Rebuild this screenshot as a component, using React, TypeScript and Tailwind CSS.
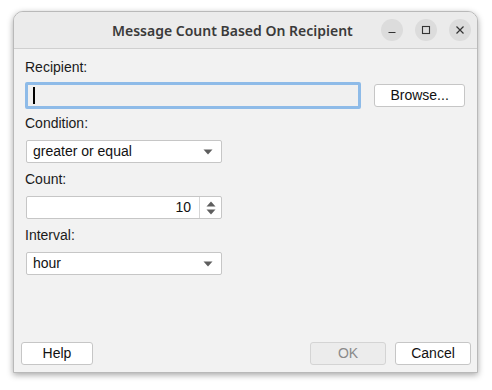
import { useState } from 'react'

const FIELD_LABEL = 'h-[17px] leading-[17px] text-[14px] text-[#1a1a1a]'

function Combo({ value }: { value: string }) {
  return (
    <div className="ml-[1px] flex h-[23px] w-[196px] items-center justify-between rounded-[2px] border border-[#c6c6c6] bg-white pl-[6px] pr-[8px]">
      <span className="text-[14px] text-[#111]">{value}</span>
      <svg width="10" height="6" viewBox="0 0 10 6">
        <path d="M0.5 0.5 H9.5 L5 5.5 Z" fill="#5e5e5e" />
      </svg>
    </div>
  )
}

function WinButton({ kind }: { kind: 'min' | 'max' | 'close' }) {
  return (
    <div className="flex h-[22px] w-[22px] items-center justify-center rounded-full bg-[#dcdcdc]">
      <svg width="10" height="10" viewBox="0 0 10 10">
        {kind === 'min' && <path d="M1.5 7.5 H8.5" stroke="#333" strokeWidth="1.2" />}
        {kind === 'max' && <rect x="1.5" y="1.5" width="7" height="7" fill="none" stroke="#333" strokeWidth="1.1" />}
        {kind === 'close' && <path d="M1.5 1.5 L8.5 8.5 M8.5 1.5 L1.5 8.5" stroke="#333" strokeWidth="1.2" />}
      </svg>
    </div>
  )
}

export default function App() {
  const [count] = useState(10)

  return (
    <div
      className="h-[390px] w-[492px] bg-white pl-[13px] pt-[11px]"
      style={{ fontFamily: '"Liberation Sans", Arial, sans-serif' }}
    >
      <div className="flex h-[362px] w-[465px] flex-col overflow-hidden rounded-t-[10px] border border-[#b9b9b9] bg-[#f2f2f2] shadow-[0_2px_6px_rgba(0,0,0,0.35)]">
        {/* Title bar */}
        <div className="flex h-[37px] shrink-0 items-center border-b border-[#cfcfcf] bg-[#ebebeb] pr-[6px]">
          <div
            className="flex-1 pl-[98px] text-[14px] font-semibold text-[#3a3a3a]"
            style={{ fontFamily: '"Noto Sans", "Open Sans", sans-serif' }}
          >
            Message Count Based On Recipient
          </div>
          <div className="flex items-center gap-[12px]">
            <WinButton kind="min" />
            <WinButton kind="max" />
            <WinButton kind="close" />
          </div>
        </div>

        {/* Body */}
        <div className="flex flex-1 flex-col pl-[11px] pr-[12px] pt-[10px]">
          <div className={FIELD_LABEL}>Recipient:</div>
          <div className="mt-[6px] flex items-center">
            <div className="flex h-[27px] w-[337px] items-center rounded-[2px] border-[3px] border-[#8ebbe8] bg-[#f0f0f0] pl-[5px]">
              <div className="h-[17px] w-[1.5px] bg-black" />
            </div>
            <button className="ml-[13px] h-[23px] w-[91px] rounded-[3px] border border-[#c6c6c6] bg-white text-[14px] text-[#111]">
              Browse...
            </button>
          </div>

          <div className={`mt-[6px] ${FIELD_LABEL}`}>Condition:</div>
          <div className="mt-[8px]">
            <Combo value="greater or equal" />
          </div>

          <div className={`mt-[8px] ${FIELD_LABEL}`}>Count:</div>
          <div className="mt-[8px] ml-[1px] flex h-[23px] w-[196px] rounded-[2px] border border-[#c6c6c6] bg-white">
            <div className="flex flex-1 items-center justify-end pr-[8px] text-[14px] text-[#111]">{count}</div>
            <div className="flex w-[22px] flex-col items-center justify-center gap-[2px] border-l border-[#d6d6d6]">
              <svg width="10" height="6" viewBox="0 0 10 6">
                <path d="M0.5 5.5 H9.5 L5 0.5 Z" fill="#5e5e5e" />
              </svg>
              <svg width="10" height="6" viewBox="0 0 10 6">
                <path d="M0.5 0.5 H9.5 L5 5.5 Z" fill="#5e5e5e" />
              </svg>
            </div>
          </div>

          <div className={`mt-[8px] ${FIELD_LABEL}`}>Interval:</div>
          <div className="mt-[8px]">
            <Combo value="hour" />
          </div>

          <div className="mt-auto mb-[7px] flex items-center">
            <button className="ml-[-4px] h-[23px] w-[72px] rounded-[3px] border border-[#c6c6c6] bg-white text-[14px] text-[#111]">
              Help
            </button>
            <button
              disabled
              className="ml-auto h-[23px] w-[76px] rounded-[3px] border border-[#d4d4d4] bg-[#ececec] text-[14px] text-[#8a8a8a]"
            >
              OK
            </button>
            <button className="ml-[9px] mr-[-6px] h-[23px] w-[76px] rounded-[3px] border border-[#c6c6c6] bg-white text-[14px] text-[#111]">
              Cancel
            </button>
          </div>
        </div>
      </div>
    </div>
  )
}
